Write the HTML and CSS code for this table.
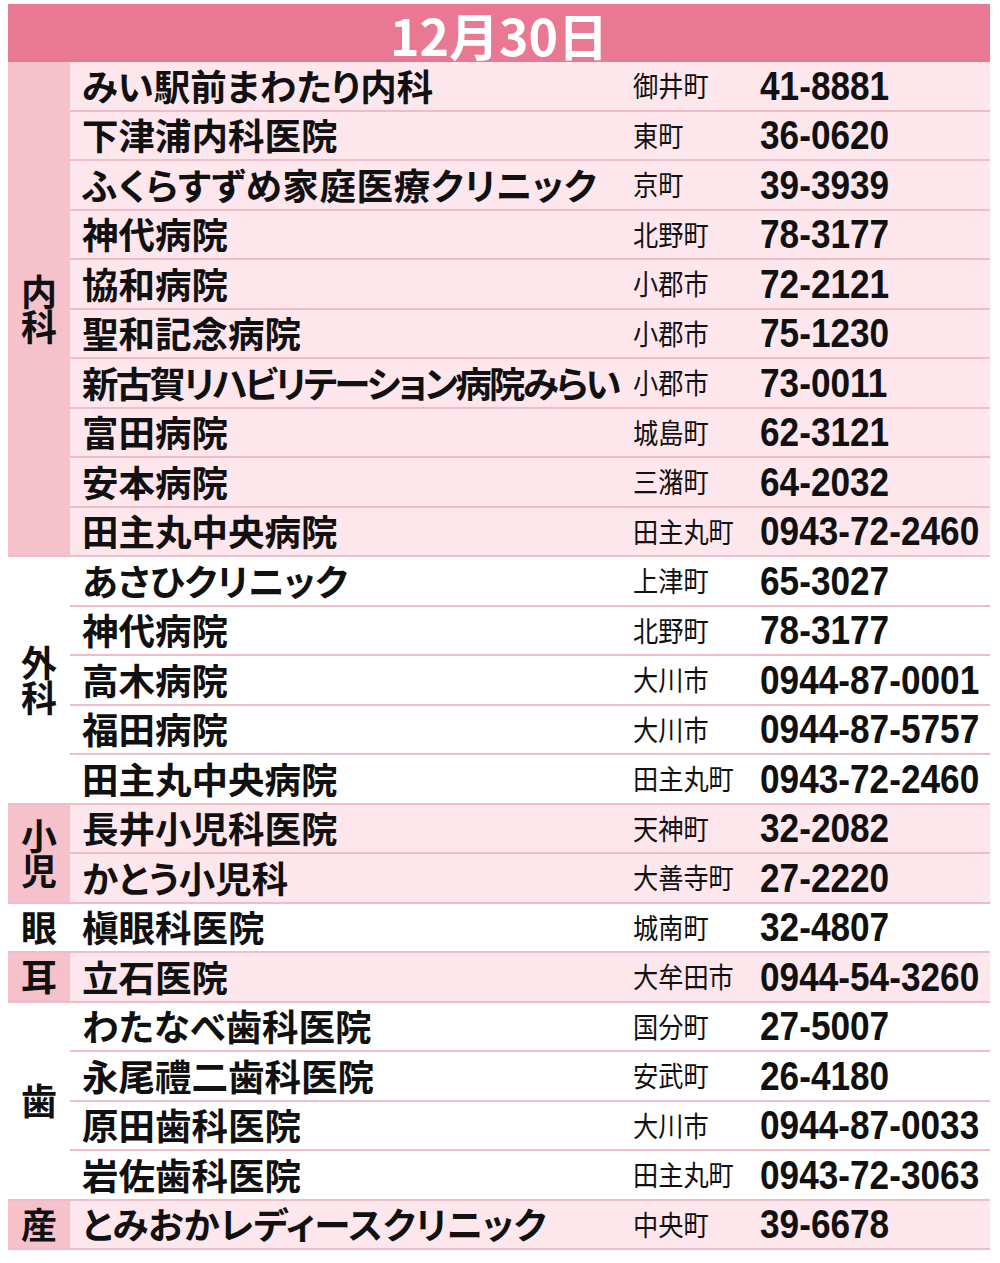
FILE: index.html
```html
<!DOCTYPE html>
<html lang="ja">
<head>
<meta charset="utf-8">
<title>12月30日 当番医</title>
<link rel="stylesheet" href="styles.css">
</head>
<body>
<div class="sheet">
  <div class="head"><span>12月30日</span></div>

  <section class="grp pink">
    <div class="cat"><span>内科</span></div>
    <ul class="rows">
      <li class="row"><span class="name">みい駅前まわたり内科</span><span class="town"><span>御井町</span></span><span class="tel"><span>41-8881</span></span></li>
      <li class="row"><span class="name">下津浦内科医院</span><span class="town"><span>東町</span></span><span class="tel"><span>36-0620</span></span></li>
      <li class="row"><span class="name long1">ふくらすずめ家庭医療クリニック</span><span class="town"><span>京町</span></span><span class="tel"><span>39-3939</span></span></li>
      <li class="row"><span class="name">神代病院</span><span class="town"><span>北野町</span></span><span class="tel"><span>78-3177</span></span></li>
      <li class="row"><span class="name">協和病院</span><span class="town"><span>小郡市</span></span><span class="tel"><span>72-2121</span></span></li>
      <li class="row"><span class="name">聖和記念病院</span><span class="town"><span>小郡市</span></span><span class="tel"><span>75-1230</span></span></li>
      <li class="row"><span class="name long2">新古賀リハビリテーション病院みらい</span><span class="town"><span>小郡市</span></span><span class="tel"><span>73-0011</span></span></li>
      <li class="row"><span class="name">富田病院</span><span class="town"><span>城島町</span></span><span class="tel"><span>62-3121</span></span></li>
      <li class="row"><span class="name">安本病院</span><span class="town"><span>三潴町</span></span><span class="tel"><span>64-2032</span></span></li>
      <li class="row"><span class="name">田主丸中央病院</span><span class="town"><span>田主丸町</span></span><span class="tel"><span>0943-72-2460</span></span></li>
    </ul>
  </section>

  <section class="grp white">
    <div class="cat"><span>外科</span></div>
    <ul class="rows">
      <li class="row"><span class="name">あさひクリニック</span><span class="town"><span>上津町</span></span><span class="tel"><span>65-3027</span></span></li>
      <li class="row"><span class="name">神代病院</span><span class="town"><span>北野町</span></span><span class="tel"><span>78-3177</span></span></li>
      <li class="row"><span class="name">高木病院</span><span class="town"><span>大川市</span></span><span class="tel"><span>0944-87-0001</span></span></li>
      <li class="row"><span class="name">福田病院</span><span class="town"><span>大川市</span></span><span class="tel"><span>0944-87-5757</span></span></li>
      <li class="row"><span class="name">田主丸中央病院</span><span class="town"><span>田主丸町</span></span><span class="tel"><span>0943-72-2460</span></span></li>
    </ul>
  </section>

  <section class="grp pink">
    <div class="cat"><span>小児</span></div>
    <ul class="rows">
      <li class="row"><span class="name">長井小児科医院</span><span class="town"><span>天神町</span></span><span class="tel"><span>32-2082</span></span></li>
      <li class="row"><span class="name">かとう小児科</span><span class="town"><span>大善寺町</span></span><span class="tel"><span>27-2220</span></span></li>
    </ul>
  </section>

  <section class="grp white">
    <div class="cat"><span>眼</span></div>
    <ul class="rows">
      <li class="row"><span class="name">槇眼科医院</span><span class="town"><span>城南町</span></span><span class="tel"><span>32-4807</span></span></li>
    </ul>
  </section>

  <section class="grp pink">
    <div class="cat"><span>耳</span></div>
    <ul class="rows">
      <li class="row"><span class="name">立石医院</span><span class="town"><span>大牟田市</span></span><span class="tel"><span>0944-54-3260</span></span></li>
    </ul>
  </section>

  <section class="grp white">
    <div class="cat"><span>歯</span></div>
    <ul class="rows">
      <li class="row"><span class="name">わたなべ歯科医院</span><span class="town"><span>国分町</span></span><span class="tel"><span>27-5007</span></span></li>
      <li class="row"><span class="name">永尾禮二歯科医院</span><span class="town"><span>安武町</span></span><span class="tel"><span>26-4180</span></span></li>
      <li class="row"><span class="name">原田歯科医院</span><span class="town"><span>大川市</span></span><span class="tel"><span>0944-87-0033</span></span></li>
      <li class="row"><span class="name">岩佐歯科医院</span><span class="town"><span>田主丸町</span></span><span class="tel"><span>0943-72-3063</span></span></li>
    </ul>
  </section>

  <section class="grp pink">
    <div class="cat"><span>産</span></div>
    <ul class="rows">
      <li class="row"><span class="name">とみおかレディースクリニック</span><span class="town"><span>中央町</span></span><span class="tel"><span>39-6678</span></span></li>
    </ul>
  </section>
</div>
</body>
</html>
```
FILE: styles.css
```css
html, body {
  margin: 0;
  padding: 0;
  background: #ffffff;
}

body {
  font-family: "Noto Sans CJK JP", "Noto Sans", sans-serif;
  color: #111111;
}

.sheet {
  width: 982px;
  margin: 4px 0 0 8px;
}

.head {
  height: 58px;
  display: flex;
  align-items: center;
  justify-content: center;
  background: #e97892;
  color: #ffffff;
}

.head span {
  font-size: 50px;
  font-weight: 700;
  line-height: 1;
  padding-top: 2px;
}

.grp {
  display: grid;
  grid-template-columns: 62px minmax(0, 1fr);
  border-bottom: 2px solid #f0bccb;
}

.grp.pink .cat {
  background: #f5c2cc;
}

.grp.pink .rows {
  background: #fde7ed;
}

.cat {
  display: flex;
  align-items: center;
  justify-content: center;
}

.cat span {
  writing-mode: vertical-rl;
  text-orientation: upright;
  font-size: 36px;
  font-weight: 700;
  line-height: 40px;
  letter-spacing: -1px;
}

.rows {
  list-style: none;
  margin: 0;
  padding: 0;
  min-width: 0;
}

.row {
  box-sizing: border-box;
  height: 49.5px;
  display: grid;
  grid-template-columns: 563px 127px minmax(0, 1fr);
  align-items: center;
  border-bottom: 2px solid #f0bccb;
}

.row:last-child {
  border-bottom: 0;
  height: 47.5px;
}

.name {
  padding-left: 12px;
  font-size: 36.5px;
  font-weight: 700;
  line-height: 40px;
  white-space: nowrap;
  font-feature-settings: "palt";
}

.name.long1 {
  letter-spacing: 0.6px;
}

.name.long2 {
  letter-spacing: -2.7px;
}

.town {
  white-space: nowrap;
}

.town span {
  display: inline-block;
  font-size: 28px;
  font-weight: 400;
  line-height: 32px;
  transform: scaleX(0.9);
  transform-origin: left center;
}

.tel {
  min-width: 0;
  white-space: nowrap;
}

.tel span {
  display: inline-block;
  font-family: "Liberation Sans", Arial, sans-serif;
  font-size: 40px;
  font-weight: 700;
  line-height: 40px;
  transform: scaleX(0.88);
  transform-origin: left center;
}
```
